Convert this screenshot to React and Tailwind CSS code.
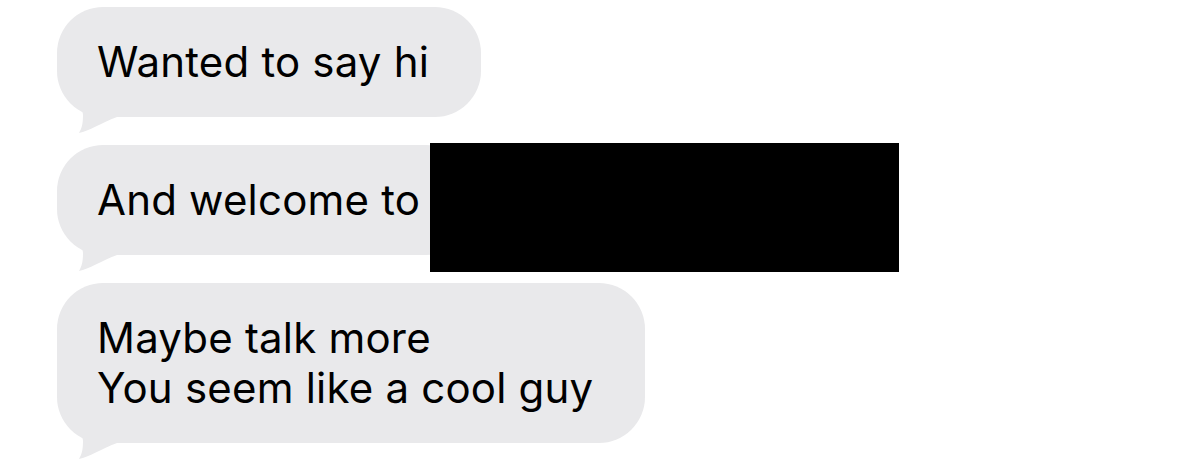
import React from "react";

function Tail() {
  return (
    <svg
      className="absolute left-0 bottom-[-18px]"
      width="80"
      height="60"
      viewBox="0 -42 80 60"
      fill="#e9e9eb"
    >
      <path d="M5 -42 C10 -20 26 -14 26 -2 C26 6 25 11 22 16 C32 14 44 6 60 0 L72 -2 L72 -42 Z" />
    </svg>
  );
}

function Bubble({ children, redact }) {
  return (
    <div className="relative self-start">
      <Tail />
      <div className="relative bg-[#e9e9eb] rounded-[46px] pl-10 pr-[52px] py-[30px] text-[42px] leading-[50px] tracking-[0.2px] text-black">
        {children}
      </div>
      {redact && <div className="absolute left-[373px] top-[-2px] w-[469px] h-[129px] bg-black" />}
    </div>
  );
}

export default function App() {
  const font = { fontFamily: "Inter, 'Liberation Sans', sans-serif" };

  return (
    <div className="w-[1200px] h-[459px] overflow-hidden bg-white" style={font}>
      <div className="flex flex-col gap-[28px] pl-[57px] pt-[7px]">
        <Bubble>Wanted to say hi</Bubble>
        <Bubble redact>And welcome to</Bubble>
        <Bubble>
          Maybe talk more
          <br />
          You seem like a cool guy
        </Bubble>
      </div>
    </div>
  );
}
